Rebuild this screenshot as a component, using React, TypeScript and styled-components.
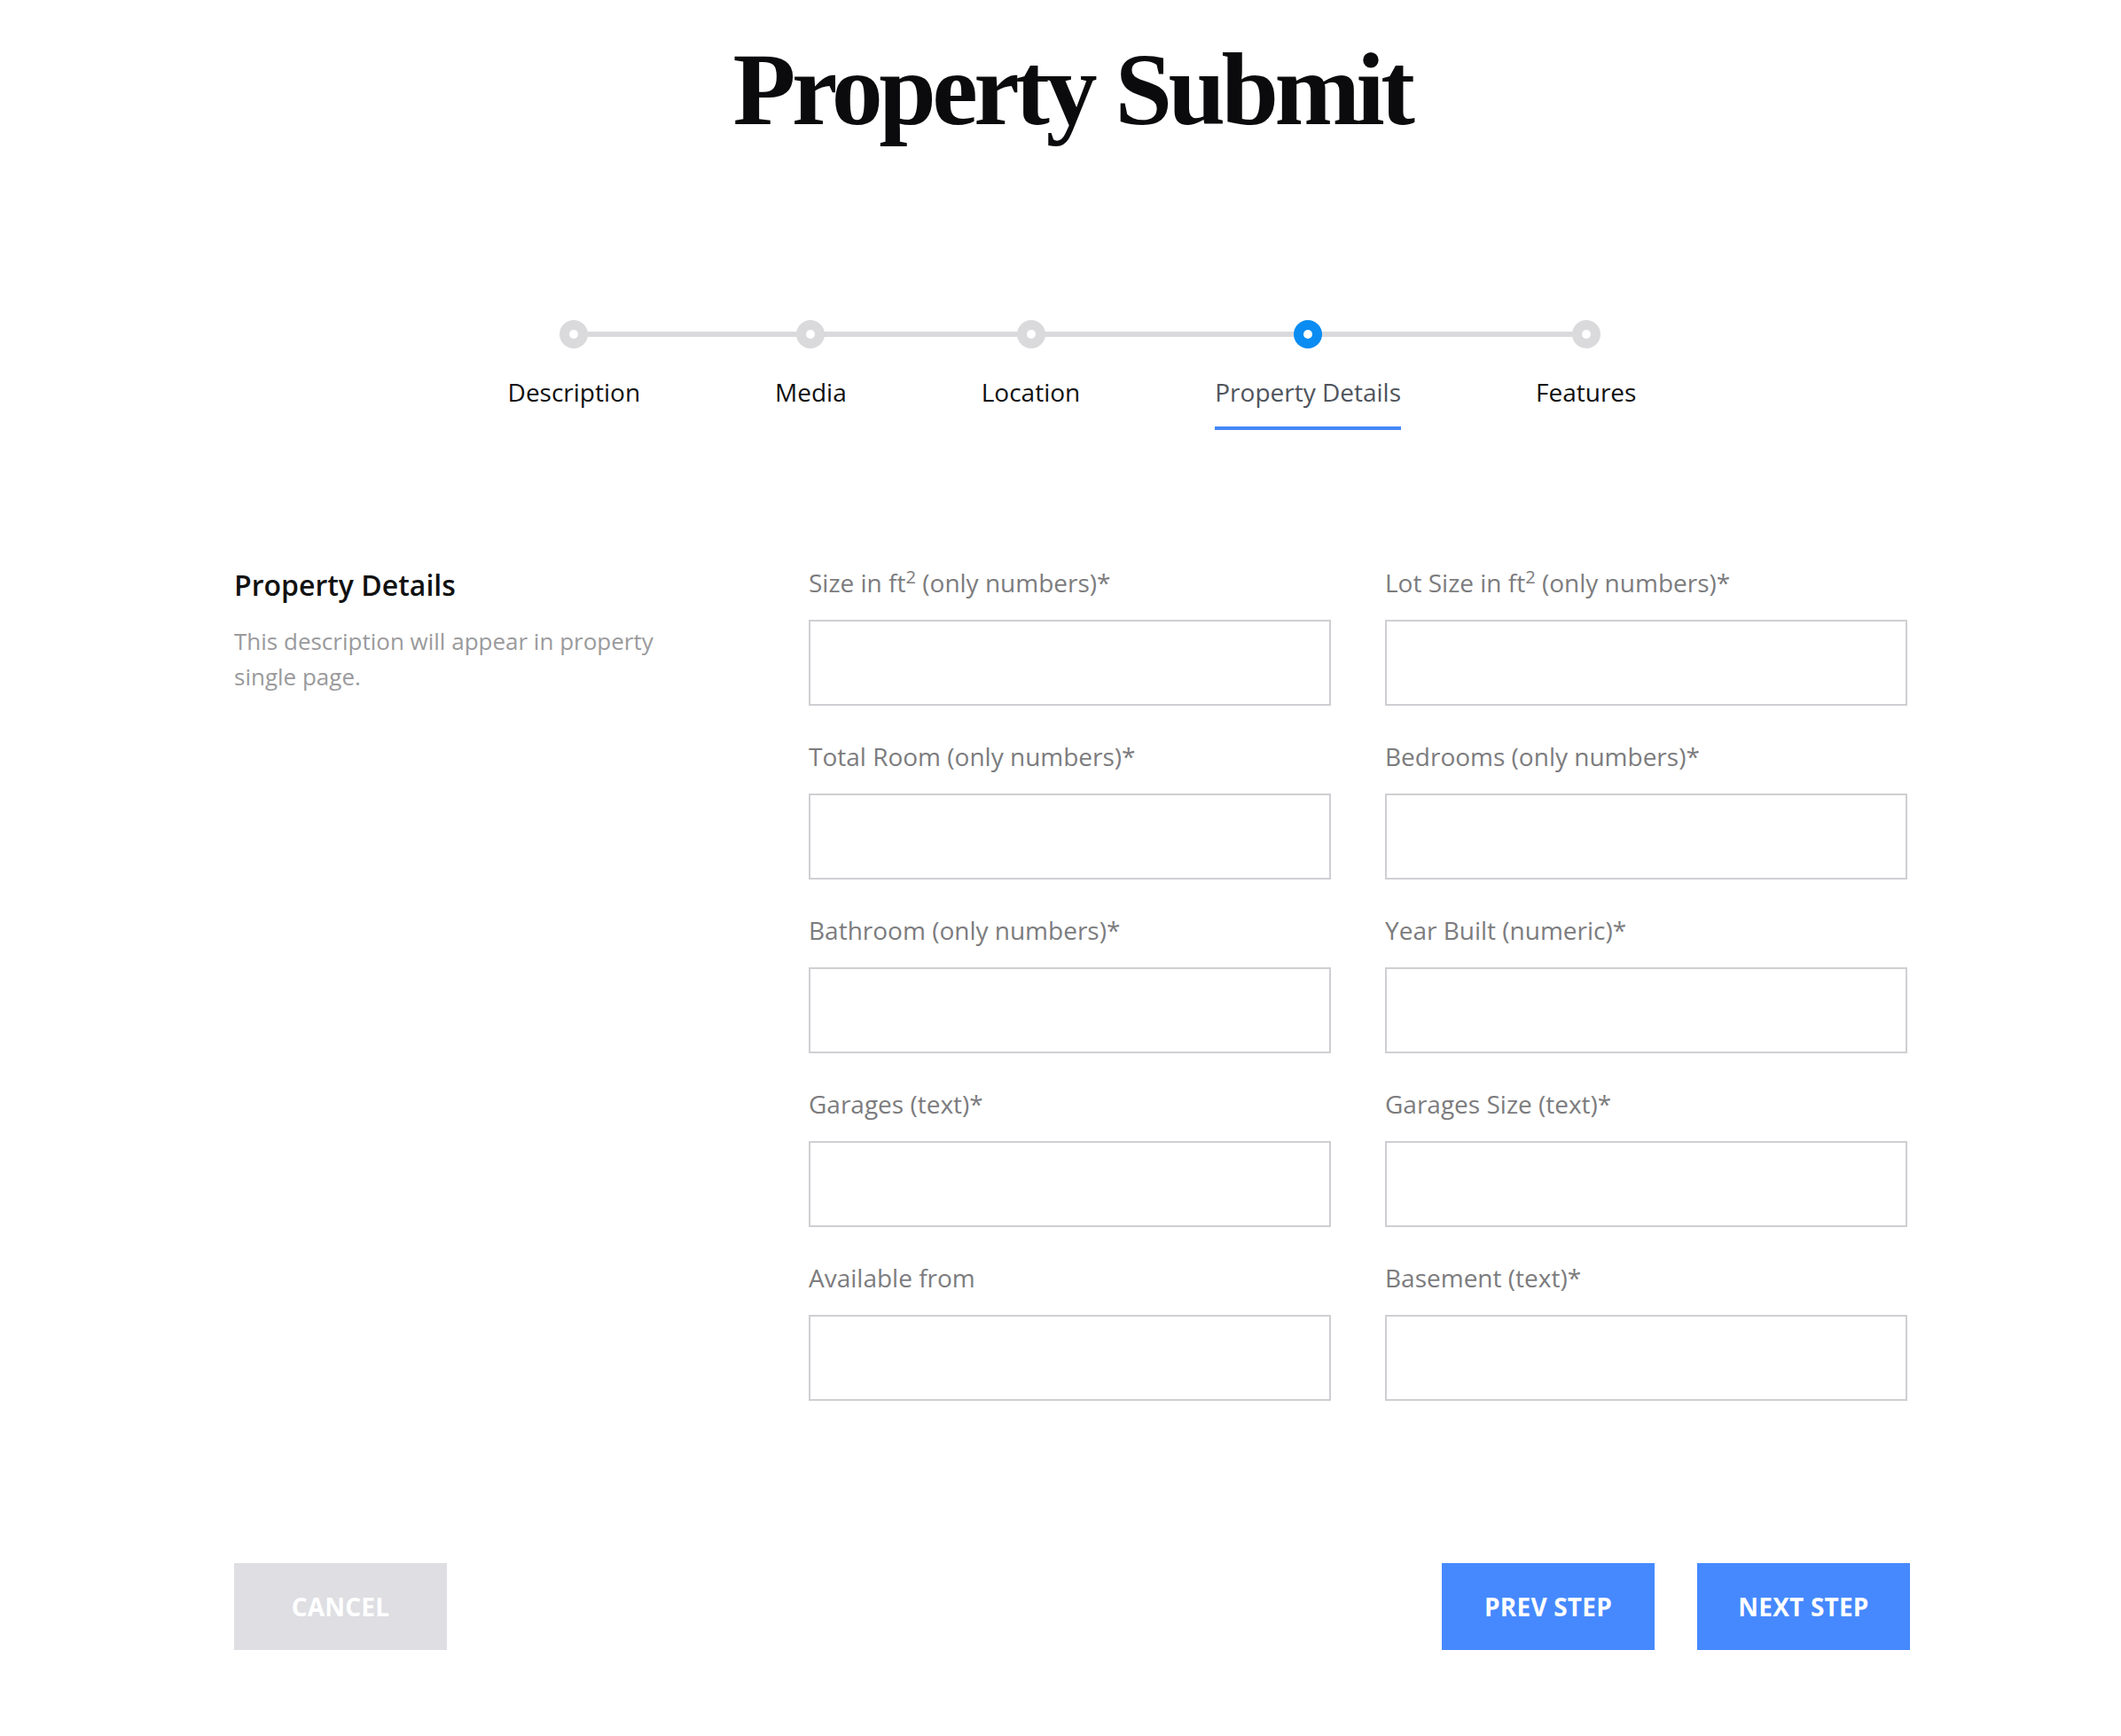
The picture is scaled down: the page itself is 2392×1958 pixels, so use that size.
import React from "react";
import styled, { createGlobalStyle } from "styled-components";

const GlobalStyle = createGlobalStyle`
  html, body { margin: 0; padding: 0; background: #ffffff; }
  body { font-family: "Open Sans", "Noto Sans", sans-serif; color: #111; }
  * { box-sizing: border-box; }
`;

const Page = styled.div`
  width: 2392px;
  min-height: 1958px;
  padding: 43px 0 97px 264px;
`;

const Container = styled.div`
  width: 1890px;
  display: flex;
  flex-direction: column;
`;

const Title = styled.h1`
  margin: 0;
  text-align: center;
  font-family: "Liberation Serif", "DejaVu Serif", serif;
  font-weight: 700;
  font-size: 116px;
  line-height: 116px;
  letter-spacing: -4.5px;
  color: #0b0b0d;
`;

const Stepper = styled.div`
  display: flex;
  justify-content: center;
  margin-top: 202px;
`;

const Step = styled.div<{ $first?: boolean; $last?: boolean }>`
  position: relative;
  display: flex;
  flex-direction: column;
  align-items: center;
  padding: 0 76px;

  &::before {
    content: "";
    position: absolute;
    top: 13px;
    height: 6px;
    left: ${(p) => (p.$first ? "50%" : "0")};
    right: ${(p) => (p.$last ? "50%" : "0")};
    background: #dadadc;
  }
`;

const Dot = styled.span<{ $active?: boolean }>`
  position: relative;
  z-index: 1;
  width: 32px;
  height: 32px;
  border-radius: 50%;
  background: ${(p) => (p.$active ? "#0a8cf2" : "#dadadc")};
  display: flex;
  align-items: center;
  justify-content: center;

  &::after {
    content: "";
    width: 10px;
    height: 10px;
    border-radius: 50%;
    background: #fff;
  }
`;

const StepLabel = styled.span<{ $active?: boolean }>`
  margin-top: 30px;
  font-size: 28px;
  line-height: 38px;
  white-space: nowrap;
  color: ${(p) => (p.$active ? "#4f545c" : "#101010")};
  padding-bottom: 20px;
  border-bottom: 4px solid ${(p) => (p.$active ? "#4488f6" : "transparent")};
`;

const FormSection = styled.div`
  display: grid;
  grid-template-columns: 648px 1239px;
  margin-top: 153px;
`;

const Intro = styled.div`
  display: flex;
  flex-direction: column;
  padding-right: 60px;
`;

const SectionHeading = styled.h2`
  margin: 0;
  font-size: 32px;
  line-height: 44px;
  font-weight: 600;
  color: #111;
`;

const SectionText = styled.p`
  margin: 21px 0 0;
  font-size: 26px;
  line-height: 40px;
  color: #9a9a9c;
  max-width: 500px;
`;

const Fields = styled.div`
  display: grid;
  grid-template-columns: 589px 589px;
  column-gap: 61px;
  row-gap: 38px;
`;

const Field = styled.label`
  display: flex;
  flex-direction: column;
`;

const FieldLabel = styled.span`
  font-size: 28px;
  line-height: 38px;
  color: #7c7c7e;
  white-space: nowrap;
`;

const Sup = styled.span`
  font-size: 0.72em;
  position: relative;
  top: -0.5em;
  vertical-align: baseline;
  line-height: 0;
`;

const Input = styled.input`
  margin-top: 23px;
  height: 97px;
  width: 100%;
  border: 2px solid #cfcfd3;
  background: #fff;
  outline: none;
  font-family: inherit;
  font-size: 28px;
  padding: 0 24px;
`;

const Actions = styled.div`
  display: flex;
  justify-content: space-between;
  margin-top: 183px;
`;

const ButtonGroup = styled.div`
  display: flex;
  gap: 48px;
`;

const Button = styled.button<{ $variant?: "muted" | "primary" }>`
  width: 240px;
  height: 98px;
  border: none;
  background: ${(p) => (p.$variant === "muted" ? "#dedee3" : "#4689ff")};
  color: #ffffff;
  font-family: "Open Sans", "Noto Sans", sans-serif;
  font-weight: 700;
  font-size: 28px;
  letter-spacing: 0.2px;
  text-transform: uppercase;
  cursor: pointer;
`;

const steps = ["Description", "Media", "Location", "Property Details", "Features"];
const activeStep = 3;

type FieldDef = { label: React.ReactNode };

const fields: FieldDef[] = [
  { label: <>Size in ft<Sup>2</Sup> (only numbers)*</> },
  { label: <>Lot Size in ft<Sup>2</Sup> (only numbers)*</> },
  { label: "Total Room (only numbers)*" },
  { label: "Bedrooms (only numbers)*" },
  { label: "Bathroom (only numbers)*" },
  { label: "Year Built (numeric)*" },
  { label: "Garages (text)*" },
  { label: "Garages Size (text)*" },
  { label: "Available from" },
  { label: "Basement (text)*" },
];

export default function App() {
  return (
    <>
      <GlobalStyle />
      <Page>
        <Container>
          <Title>Property Submit</Title>
          <Stepper>
            {steps.map((s, i) => (
              <Step key={s} $first={i === 0} $last={i === steps.length - 1}>
                <Dot $active={i === activeStep} />
                <StepLabel $active={i === activeStep}>{s}</StepLabel>
              </Step>
            ))}
          </Stepper>
          <FormSection>
            <Intro>
              <SectionHeading>Property Details</SectionHeading>
              <SectionText>This description will appear in property single page.</SectionText>
            </Intro>
            <Fields>
              {fields.map((f, i) => (
                <Field key={i}>
                  <FieldLabel>{f.label}</FieldLabel>
                  <Input type="text" />
                </Field>
              ))}
            </Fields>
          </FormSection>
          <Actions>
            <Button $variant="muted">Cancel</Button>
            <ButtonGroup>
              <Button $variant="primary">Prev Step</Button>
              <Button $variant="primary">Next Step</Button>
            </ButtonGroup>
          </Actions>
        </Container>
      </Page>
    </>
  );
}
